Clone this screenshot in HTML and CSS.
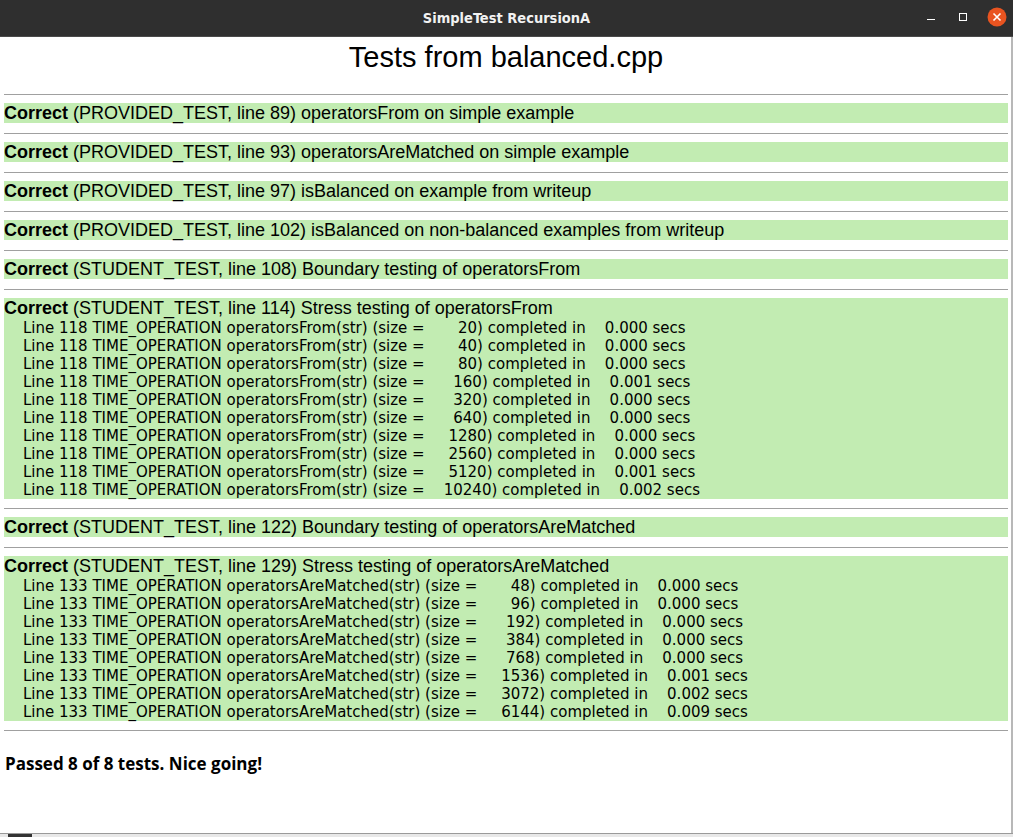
FILE: index.html
```html
<!DOCTYPE html>
<html>
<head>
<meta charset="utf-8">
<link rel="stylesheet" href="styles.css">
</head>
<body>
<div class="window">
  <div class="titlebar">
    <div class="title">SimpleTest RecursionA</div>
    <div class="controls">
      <svg class="btn" width="16" height="16" viewBox="0 0 16 16"><rect x="4" y="10" width="8" height="1" fill="#ffffff"/></svg>
      <svg class="btn" width="16" height="16" viewBox="0 0 16 16"><rect x="4.5" y="4.5" width="7" height="7" fill="none" stroke="#ffffff" stroke-width="1"/></svg>
      <svg class="btn close" width="20" height="20" viewBox="0 0 20 20"><circle cx="10" cy="10" r="9.5" fill="#e95420"/><path d="M6.5 6.5 L13.5 13.5 M13.5 6.5 L6.5 13.5" stroke="#ffffff" stroke-width="1.6"/></svg>
    </div>
  </div>
  <div class="content">
    <h1 class="heading">Tests from balanced.cpp</h1>
    <div class="test"><div class="box"><div class="head"><b>Correct</b> (PROVIDED_TEST, line 89) operatorsFrom on simple example</div></div></div>
    <div class="test"><div class="box"><div class="head"><b>Correct</b> (PROVIDED_TEST, line 93) operatorsAreMatched on simple example</div></div></div>
    <div class="test"><div class="box"><div class="head"><b>Correct</b> (PROVIDED_TEST, line 97) isBalanced on example from writeup</div></div></div>
    <div class="test"><div class="box"><div class="head"><b>Correct</b> (PROVIDED_TEST, line 102) isBalanced on non-balanced examples from writeup</div></div></div>
    <div class="test"><div class="box"><div class="head"><b>Correct</b> (STUDENT_TEST, line 108) Boundary testing of operatorsFrom</div></div></div>
    <div class="test"><div class="box"><div class="head"><b>Correct</b> (STUDENT_TEST, line 114) Stress testing of operatorsFrom</div>
<div class="details">
<div class="detail">Line 118 TIME_OPERATION operatorsFrom(str) (size =       20) completed in    0.000 secs</div>
<div class="detail">Line 118 TIME_OPERATION operatorsFrom(str) (size =       40) completed in    0.000 secs</div>
<div class="detail">Line 118 TIME_OPERATION operatorsFrom(str) (size =       80) completed in    0.000 secs</div>
<div class="detail">Line 118 TIME_OPERATION operatorsFrom(str) (size =      160) completed in    0.001 secs</div>
<div class="detail">Line 118 TIME_OPERATION operatorsFrom(str) (size =      320) completed in    0.000 secs</div>
<div class="detail">Line 118 TIME_OPERATION operatorsFrom(str) (size =      640) completed in    0.000 secs</div>
<div class="detail">Line 118 TIME_OPERATION operatorsFrom(str) (size =     1280) completed in    0.000 secs</div>
<div class="detail">Line 118 TIME_OPERATION operatorsFrom(str) (size =     2560) completed in    0.000 secs</div>
<div class="detail">Line 118 TIME_OPERATION operatorsFrom(str) (size =     5120) completed in    0.001 secs</div>
<div class="detail">Line 118 TIME_OPERATION operatorsFrom(str) (size =    10240) completed in    0.002 secs</div>
</div>
    </div></div>
    <div class="test"><div class="box"><div class="head"><b>Correct</b> (STUDENT_TEST, line 122) Boundary testing of operatorsAreMatched</div></div></div>
    <div class="test"><div class="box"><div class="head"><b>Correct</b> (STUDENT_TEST, line 129) Stress testing of operatorsAreMatched</div>
<div class="details">
<div class="detail">Line 133 TIME_OPERATION operatorsAreMatched(str) (size =       48) completed in    0.000 secs</div>
<div class="detail">Line 133 TIME_OPERATION operatorsAreMatched(str) (size =       96) completed in    0.000 secs</div>
<div class="detail">Line 133 TIME_OPERATION operatorsAreMatched(str) (size =      192) completed in    0.000 secs</div>
<div class="detail">Line 133 TIME_OPERATION operatorsAreMatched(str) (size =      384) completed in    0.000 secs</div>
<div class="detail">Line 133 TIME_OPERATION operatorsAreMatched(str) (size =      768) completed in    0.000 secs</div>
<div class="detail">Line 133 TIME_OPERATION operatorsAreMatched(str) (size =     1536) completed in    0.001 secs</div>
<div class="detail">Line 133 TIME_OPERATION operatorsAreMatched(str) (size =     3072) completed in    0.002 secs</div>
<div class="detail">Line 133 TIME_OPERATION operatorsAreMatched(str) (size =     6144) completed in    0.009 secs</div>
</div>
    </div></div>
    <div class="summary">Passed 8 of 8 tests. Nice going!</div>
  </div>
  <div class="behind">
    <span class="tab"></span>
  </div>
</div>
</body>
</html>
```

FILE: styles.css
```css
html, body {
  margin: 0;
  padding: 0;
  background: #ffffff;
}
.window {
  width: 1013px;
  height: 837px;
  display: flex;
  flex-direction: column;
  overflow: hidden;
}
.titlebar {
  height: 36px;
  flex: none;
  background: #2f2f2f;
  border-bottom: 1px solid #4a4a4a;
  display: flex;
  align-items: center;
  justify-content: center;
  position: relative;
}
.title {
  color: #f2f2f2;
  font-family: "DejaVu Sans Condensed", "DejaVu Sans", sans-serif;
  font-weight: bold;
  font-size: 14.5px;
}
.controls {
  position: absolute;
  right: 6px;
  top: 7px;
  display: flex;
  align-items: center;
  gap: 16px;
}
.content {
  flex: 1;
  border-right: 2px solid #b8b8b8;
  padding: 0 3px 0 4px;
  font-family: "Liberation Sans", Arial, sans-serif;
  color: #000;
}
.heading {
  margin: 3px 0 0;
  height: 54px;
  font-size: 29px;
  font-weight: normal;
  line-height: 34px;
  text-align: center;
}
.test {
  border-top: 1px solid #a0a0a0;
  padding: 8px 0 10px;
}
.box {
  background: #c2ecb2;
}
.head {
  font-size: 18px;
  line-height: 20px;
  height: 20px;
}
.details {
  padding: 1px 0 0;
  margin-bottom: -1px;
}
.detail {
  font-family: "DejaVu Sans", sans-serif;
  font-size: 15px;
  line-height: 18px;
  white-space: pre;
  padding-left: 19px;
}
.summary {
  border-top: 1px solid #a0a0a0;
  padding-top: 21px;
  font-family: "Open Sans", sans-serif;
  font-weight: bold;
  font-size: 17px;
  padding-left: 1px;
}
.behind {
  height: 3px;
  flex: none;
  border-top: 1px solid #9a9a9a;
  background: #e8e8e8;
}
.tab {
  display: block;
  margin-left: 8px;
  width: 24px;
  height: 3px;
  background: #333;
}
```
